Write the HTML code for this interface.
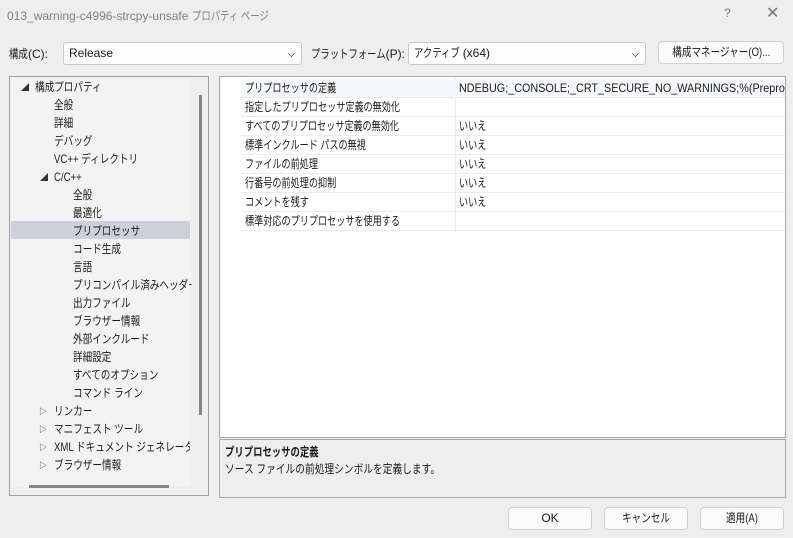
<!DOCTYPE html>
<html><head><meta charset="utf-8"><style>
*{margin:0;padding:0;box-sizing:border-box}
body{width:793px;height:538px;background:#eeeeee;font-family:"Liberation Sans","Noto Sans CJK JP",sans-serif;font-size:12px;color:#1a1a1a;position:relative;overflow:hidden}
.a{position:absolute;white-space:nowrap}
.j{display:inline-block;transform:scaleX(.78);transform-origin:0 50%;white-space:nowrap}
.jc{display:inline-block;transform:scaleX(.8);transform-origin:50% 50%;white-space:nowrap}
.combo{position:absolute;background:#fdfdfd;border:1px solid #c8c8c8;border-radius:3px;height:23px;line-height:21px;padding-left:5px;white-space:nowrap}
.chev{position:absolute;right:6px;top:7px;width:7px;height:7px;border-right:1px solid #555;border-bottom:1px solid #555;transform:rotate(45deg) scale(.7)}
.btn{position:absolute;background:#fbfbfb;border:1px solid #d0d0d0;border-radius:4px;height:23px;line-height:21px;text-align:center;white-space:nowrap}
.tree{position:absolute;left:9px;top:76px;width:200px;height:420px;border:1px solid #a0a0a0;background:#eeeeee}
.ti{position:absolute;height:18px;line-height:18px;white-space:nowrap;transform:scaleX(.8);transform-origin:0 50%}
.tri{position:absolute;font-size:8px;color:#333}
.grid{position:absolute;left:219px;top:76px;width:567px;height:362px;border:1px solid #a8a8a8;background:#fff;overflow:hidden}
.row{position:absolute;left:21px;width:545px;height:19px;border-bottom:1px solid #ececec;line-height:18px;white-space:nowrap;overflow:hidden}
.row span{position:absolute}
.row .l{transform:scaleX(.76);transform-origin:0 50%}
.desc{position:absolute;left:219px;top:439px;width:567px;height:59px;border:1px solid #a8a8a8;background:#eeeeee}
</style></head><body>
<div class="a" style="left:7px;top:7px;color:#808080;font-size:12px">013_warning-c4996-strcpy-unsafe <span class="j">プロパティ ページ</span></div>
<div class="a" style="left:724px;top:6px;color:#777">?</div>
<div class="a" style="left:766px;top:3px;color:#777;font-size:16px">✕</div>

<div class="a" style="left:9px;top:45px"><span class="j">構成</span><span style="margin-left:-5px">(C):</span></div>
<div class="combo" style="left:63px;top:42px;width:239px">Release<div class="chev"></div></div>
<div class="a" style="left:311px;top:45px"><span class="j">プラットフォーム</span><span style="margin-left:-21px">(P):</span></div>
<div class="combo" style="left:408px;top:42px;width:238px"><span class="j">アクティブ</span><span style="margin-left:-10px">(x64)</span><div class="chev"></div></div>
<div class="btn" style="left:658px;top:41px;width:126px"><span class="jc">構成マネージャー(O)...</span></div>

<div class="tree">
 <div style="position:absolute;left:1px;top:1px;width:180px;height:409px;background:#f3f3f3"></div>
 <div style="position:absolute;left:1px;top:144px;width:179px;height:18px;background:#cdcfd9"></div>
 <div style="position:absolute;left:189px;top:18px;width:3px;height:320px;background:#858585"></div>
 <div style="position:absolute;left:19px;top:408px;width:140px;height:3px;background:#858585"></div>
 <div class="tri" style="left:11px;top:5px">◢</div><div class="ti" style="left:25px;top:1px">構成プロパティ</div>
 <div class="ti" style="left:44px;top:19px">全般</div>
 <div class="ti" style="left:44px;top:37px">詳細</div>
 <div class="ti" style="left:44px;top:55px">デバッグ</div>
 <div class="ti" style="left:44px;top:73px">VC++ ディレクトリ</div>
 <div class="tri" style="left:30px;top:95px">◢</div><div class="ti" style="left:44px;top:91px">C/C++</div>
 <div class="ti" style="left:63px;top:109px">全般</div>
 <div class="ti" style="left:63px;top:127px">最適化</div>
 <div class="ti" style="left:63px;top:145px">プリプロセッサ</div>
 <div class="ti" style="left:63px;top:163px">コード生成</div>
 <div class="ti" style="left:63px;top:181px">言語</div>
 <div class="ti" style="left:63px;top:199px;width:148px;overflow:hidden">プリコンパイル済みヘッダー</div>
 <div class="ti" style="left:63px;top:217px">出力ファイル</div>
 <div class="ti" style="left:63px;top:235px">ブラウザー情報</div>
 <div class="ti" style="left:63px;top:253px">外部インクルード</div>
 <div class="ti" style="left:63px;top:271px">詳細設定</div>
 <div class="ti" style="left:63px;top:289px">すべてのオプション</div>
 <div class="ti" style="left:63px;top:307px">コマンド ライン</div>
 <div class="tri" style="left:29px;top:329px">▷</div><div class="ti" style="left:44px;top:325px">リンカー</div>
 <div class="tri" style="left:29px;top:347px">▷</div><div class="ti" style="left:44px;top:343px">マニフェスト ツール</div>
 <div class="tri" style="left:29px;top:365px">▷</div><div class="ti" style="left:44px;top:361px;width:170px;overflow:hidden">XML ドキュメント ジェネレーター</div>
 <div class="tri" style="left:29px;top:383px">▷</div><div class="ti" style="left:44px;top:379px">ブラウザー情報</div>
</div>

<div class="grid">
 <div style="position:absolute;left:235px;top:0;width:1px;height:155px;background:#ececec"></div>
 <div class="row" style="top:2px;background:#f6f7f9"><span class="l" style="left:4px">プリプロセッサの定義</span><span style="left:218px;transform:scaleX(.9);transform-origin:0 50%">NDEBUG;_CONSOLE;_CRT_SECURE_NO_WARNINGS;%(Prepro</span></div>
 <div class="row" style="top:21px"><span class="l" style="left:4px">指定したプリプロセッサ定義の無効化</span></div>
 <div class="row" style="top:40px"><span class="l" style="left:4px">すべてのプリプロセッサ定義の無効化</span><span class="l" style="left:218px">いいえ</span></div>
 <div class="row" style="top:59px"><span class="l" style="left:4px">標準インクルード パスの無視</span><span class="l" style="left:218px">いいえ</span></div>
 <div class="row" style="top:78px"><span class="l" style="left:4px">ファイルの前処理</span><span class="l" style="left:218px">いいえ</span></div>
 <div class="row" style="top:97px"><span class="l" style="left:4px">行番号の前処理の抑制</span><span class="l" style="left:218px">いいえ</span></div>
 <div class="row" style="top:116px"><span class="l" style="left:4px">コメントを残す</span><span class="l" style="left:218px">いいえ</span></div>
 <div class="row" style="top:135px"><span class="l" style="left:4px">標準対応のプリプロセッサを使用する</span></div>
</div>

<div class="desc">
 <div class="a" style="left:5px;top:3px;font-weight:bold"><span class="j">プリプロセッサの定義</span></div>
 <div class="a" style="left:5px;top:20px"><span class="j" style="transform:scaleX(.81)">ソース ファイルの前処理シンボルを定義します。</span></div>
</div>

<div class="btn" style="left:508px;top:507px;width:84px">OK</div>
<div class="btn" style="left:604px;top:507px;width:84px"><span class="jc">キャンセル</span></div>
<div class="btn" style="left:700px;top:507px;width:84px"><span class="jc">適用(A)</span></div>
</body></html>
